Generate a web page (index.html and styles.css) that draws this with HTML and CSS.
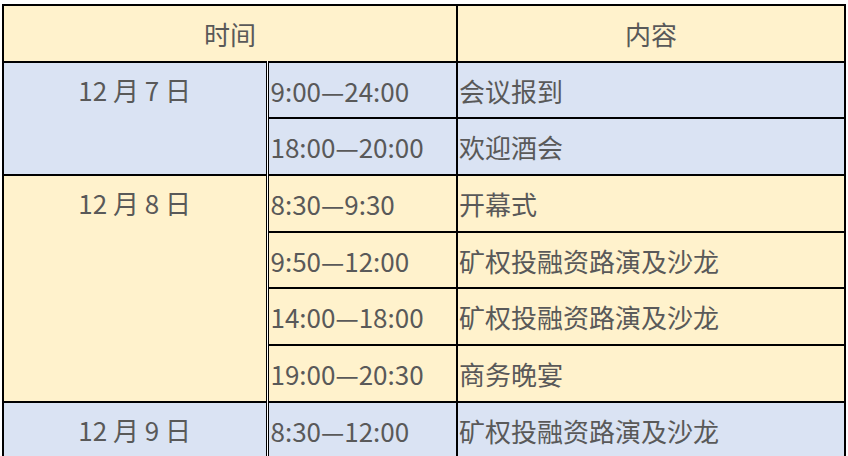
FILE: index.html
```html
<!DOCTYPE html>
<html lang="zh-CN">
<head>
<meta charset="utf-8">
<title>日程安排</title>
<link rel="stylesheet" href="styles.css">
</head>
<body>
<div class="wrap">
<table class="schedule">
  <colgroup>
    <col class="c-date">
    <col class="c-time">
    <col class="c-content">
  </colgroup>
  <thead>
    <tr class="yellow">
      <th colspan="2">时间</th>
      <th>内容</th>
    </tr>
  </thead>
  <tbody class="blue">
    <tr>
      <td class="date" rowspan="2">12 月 7 日</td>
      <td class="time">9:00—24:00</td>
      <td class="content">会议报到</td>
    </tr>
    <tr>
      <td class="time">18:00—20:00</td>
      <td class="content">欢迎酒会</td>
    </tr>
  </tbody>
  <tbody class="yellow">
    <tr>
      <td class="date" rowspan="4">12 月 8 日</td>
      <td class="time">8:30—9:30</td>
      <td class="content">开幕式</td>
    </tr>
    <tr>
      <td class="time">9:50—12:00</td>
      <td class="content">矿权投融资路演及沙龙</td>
    </tr>
    <tr>
      <td class="time">14:00—18:00</td>
      <td class="content">矿权投融资路演及沙龙</td>
    </tr>
    <tr>
      <td class="time">19:00—20:30</td>
      <td class="content">商务晚宴</td>
    </tr>
  </tbody>
  <tbody class="blue">
    <tr>
      <td class="date" rowspan="1">12 月 9 日</td>
      <td class="time">8:30—12:00</td>
      <td class="content">矿权投融资路演及沙龙</td>
    </tr>
  </tbody>
</table>
</div>
</body>
</html>
```

FILE: styles.css
```css
html, body {
  margin: 0;
  padding: 0;
  background: #ffffff;
}

.wrap {
  padding: 4px 0 0 2px;
  width: 848px;
  height: 456px;
  box-sizing: border-box;
  overflow: hidden;
}

.schedule {
  border-collapse: collapse;
  table-layout: fixed;
  width: 842px;
  font-family: "Noto Sans CJK SC", "Noto Sans", sans-serif;
  font-size: 26px;
  color: #595959;
  border: 2px solid #000;
}

.c-date { width: 264px; }
.c-time { width: 190px; }
.c-content { width: 388px; }

.schedule th,
.schedule td {
  border: 2px solid #000;
  padding: 0;
  height: 54.7px;
  line-height: 53px;
  white-space: nowrap;
  overflow: hidden;
}

.schedule th {
  font-weight: normal;
  text-align: center;
}

.yellow { background: #fff2cc; }
.blue { background: #dae3f3; }

.schedule td.date {
  text-align: center;
  vertical-align: top;
  border-right: 3px double #000;
}

.schedule td.time {
  text-align: left;
  padding-left: 2px;
}

.schedule td.content {
  text-align: left;
  padding-left: 1px;
}
```
